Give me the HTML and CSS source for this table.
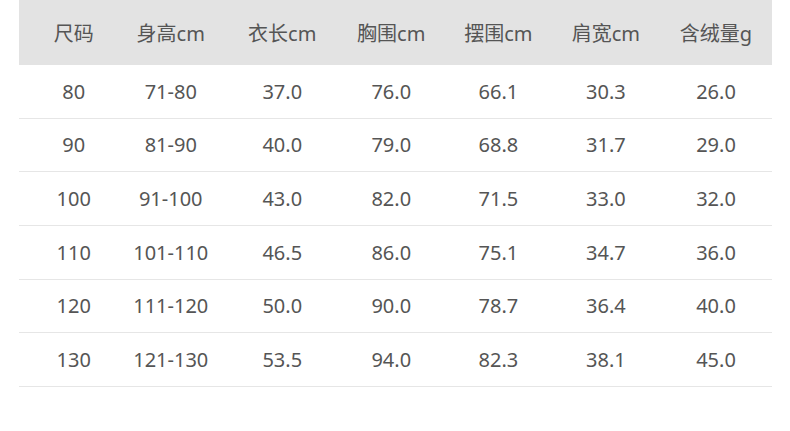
FILE: index.html
```html
<!DOCTYPE html>
<html lang="zh">
<head>
<meta charset="utf-8">
<link rel="stylesheet" href="styles.css">
</head>
<body>
<div class="size-table">
  <div class="row head">
    <div class="cell c1">尺码</div><div class="cell c2">身高cm</div><div class="cell">衣长cm</div><div class="cell">胸围cm</div><div class="cell">摆围cm</div><div class="cell">肩宽cm</div><div class="cell">含绒量g</div>
  </div>
  <div class="row">
    <div class="cell c1">80</div><div class="cell c2">71-80</div><div class="cell">37.0</div><div class="cell">76.0</div><div class="cell">66.1</div><div class="cell">30.3</div><div class="cell">26.0</div>
  </div>
  <div class="row">
    <div class="cell c1">90</div><div class="cell c2">81-90</div><div class="cell">40.0</div><div class="cell">79.0</div><div class="cell">68.8</div><div class="cell">31.7</div><div class="cell">29.0</div>
  </div>
  <div class="row">
    <div class="cell c1">100</div><div class="cell c2">91-100</div><div class="cell">43.0</div><div class="cell">82.0</div><div class="cell">71.5</div><div class="cell">33.0</div><div class="cell">32.0</div>
  </div>
  <div class="row">
    <div class="cell c1">110</div><div class="cell c2">101-110</div><div class="cell">46.5</div><div class="cell">86.0</div><div class="cell">75.1</div><div class="cell">34.7</div><div class="cell">36.0</div>
  </div>
  <div class="row">
    <div class="cell c1">120</div><div class="cell c2">111-120</div><div class="cell">50.0</div><div class="cell">90.0</div><div class="cell">78.7</div><div class="cell">36.4</div><div class="cell">40.0</div>
  </div>
  <div class="row">
    <div class="cell c1">130</div><div class="cell c2">121-130</div><div class="cell">53.5</div><div class="cell">94.0</div><div class="cell">82.3</div><div class="cell">38.1</div><div class="cell">45.0</div>
  </div>
</div>
</body>
</html>
```

FILE: styles.css
```css
html, body {
  margin: 0;
  padding: 0;
  background: #ffffff;
}

.size-table {
  margin-left: 19px;
  width: 753px;
  font-family: "Noto Sans", "Noto Sans CJK SC", sans-serif;
  font-size: 20px;
  color: #555555;
}

.row {
  display: grid;
  grid-template-columns: 103.5px 104.5px 110.5px 107.5px 106.75px 108.25px 112px;
  align-items: center;
  height: 53.67px;
  box-sizing: border-box;
  border-bottom: 1px solid #e6e6e6;
}

.row.head {
  height: 65px;
  background: #e3e3e3;
  border-bottom: none;
}

.cell {
  text-align: center;
  white-space: nowrap;
}

.c1 {
  padding-left: 6px;
}

.c2 {
  padding-right: 8px;
}
```
